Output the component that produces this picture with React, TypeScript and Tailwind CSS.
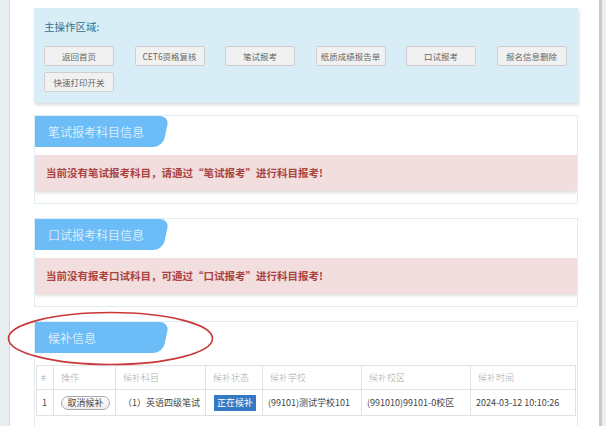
import React from 'react';

const font = '"Noto Sans CJK SC", "Microsoft YaHei", "Liberation Sans", sans-serif';

const actions = ['返回首页', 'CET6资格复核', '笔试报考', '纸质成绩报告单', '口试报考', '报名信息删除', '快速打印开关'];

// --- Tab header of a section ---
const Tab = ({ title }: { title: string }) => (
    <div className="relative h-[31px] w-[131px]">
        <div className="absolute inset-y-0 -left-[12px] right-0 bg-[#6cbdf7] rounded-tr-[9px] rounded-br-[9px] -skew-x-[12deg]"></div>
        <span className="relative block pl-[13px] leading-[31px] text-[12px] font-light text-white">{title}</span>
    </div>
);

const Alert = ({ children }: { children: React.ReactNode }) => (
    <div className="mt-[8px] h-[36px] flex items-center pl-[11px] bg-[#f2dede] shadow-[0_2px_3px_rgba(0,0,0,0.12)] text-[10.5px] font-bold text-[#a94442]">
        {children}
    </div>
);

const Section = ({ title, children, className = '' }: { title: string; children: React.ReactNode; className?: string }) => (
    <div className={`border border-[#dfecf2] bg-white overflow-hidden ${className}`}>
        <Tab title={title} />
        {children}
    </div>
);

const cols = [
    { label: '#', w: 'w-[17px]', pad: 'pl-[4px]' },
    { label: '操作', w: 'w-[62px]', pad: 'pl-[7px]' },
    { label: '候补科目', w: 'w-[90px]', pad: 'pl-[7px]' },
    { label: '候补状态', w: 'w-[57px]', pad: 'pl-[7px]' },
    { label: '候补学校', w: 'w-[99px]', pad: 'pl-[7px]' },
    { label: '候补校区', w: 'w-[109px]', pad: 'pl-[7px]' },
    { label: '候补时间', w: 'w-[105px]', pad: 'pl-[7px]' },
];

export default function App() {
    return (
        <div className="relative w-[606px] h-[426px] overflow-hidden flex bg-white" style={{ fontFamily: font }}>
            {/* left gutter */}
            <div className="w-[10px] shrink-0 bg-[#e9eef1] border-r border-[#d0d6da]"></div>

            <div className="flex-1 pl-[24px] pr-[21px] pt-[8px]">
                {/* main operation area */}
                <div className="bg-[#d9edf7] pt-[10px] px-[10px] pb-[11px] shadow-[1px_2px_3px_rgba(0,0,0,0.15)]">
                    <div className="text-[10.5px] leading-[17px] h-[17px] text-[#31708f]">主操作区域:</div>
                    <div className="mt-[11px] flex flex-wrap gap-x-[20.5px] gap-y-[6px]">
                        {actions.map((a) => (
                            <button
                                key={a}
                                className="w-[70px] h-[20px] bg-[#f1f1f1] border border-[#cfcfcf] rounded-[2px] text-[8.5px] text-[#666] flex items-center justify-center"
                            >
                                {a}
                            </button>
                        ))}
                    </div>
                </div>

                <Section title="笔试报考科目信息" className="mt-[12px] pb-[12px]">
                    <Alert>当前没有笔试报考科目，请通过“笔试报考”进行科目报考!</Alert>
                </Section>

                <Section title="口试报考科目信息" className="mt-[14px] pb-[12px]">
                    <Alert>当前没有报考口试科目，可通过“口试报考”进行科目报考!</Alert>
                </Section>

                <Section title="候补信息" className="mt-[14px] pb-[20px]">
                    <div className="mt-[12px] px-[1px]">
                        <table className="border-collapse text-[9px]">
                            <thead>
                                <tr className="h-[24px] text-[#aaaaaa]">
                                    {cols.map((c) => (
                                        <th key={c.label} className={`${c.w} ${c.pad} border border-[#e2e2e2] text-left font-light`}>{c.label}</th>
                                    ))}
                                </tr>
                            </thead>
                            <tbody>
                                <tr className="h-[26px] text-[#444]">
                                    <td className="pl-[5px] border border-[#e2e2e2]">1</td>
                                    <td className="pl-[7px] border border-[#e2e2e2]">
                                        <span className="inline-flex items-center justify-center w-[49px] h-[14px] rounded-full border border-[#a8a8a8] bg-gradient-to-b from-white to-[#ececec] text-[#444]">取消候补</span>
                                    </td>
                                    <td className="pl-[7px] border border-[#e2e2e2]">（1）英语四级笔试</td>
                                    <td className="pl-[8px] border border-[#e2e2e2]">
                                        <span className="inline-flex items-center justify-center w-[42px] h-[16px] bg-[#3379c4] text-white">正在候补</span>
                                    </td>
                                    <td className="pl-[5px] border border-[#e2e2e2]">(99101)测试学校101</td>
                                    <td className="pl-[5px] border border-[#e2e2e2]">(991010)99101-0校区</td>
                                    <td className="pl-[5px] border border-[#e2e2e2]">2024-03-12 10:10:26</td>
                                </tr>
                            </tbody>
                        </table>
                    </div>
                </Section>
            </div>

            {/* right scrollbar edge */}
            <div className="w-[7px] shrink-0 border-l-[3px] border-[#c8c8c8] bg-[#ededed]"></div>

            {/* red annotation ellipse */}
            <svg className="absolute left-0 top-0 pointer-events-none" width="606" height="426">
                <ellipse cx="110.5" cy="338.5" rx="102" ry="26" fill="none" stroke="#c9383a" strokeWidth="1.6" />
            </svg>
        </div>
    );
}
